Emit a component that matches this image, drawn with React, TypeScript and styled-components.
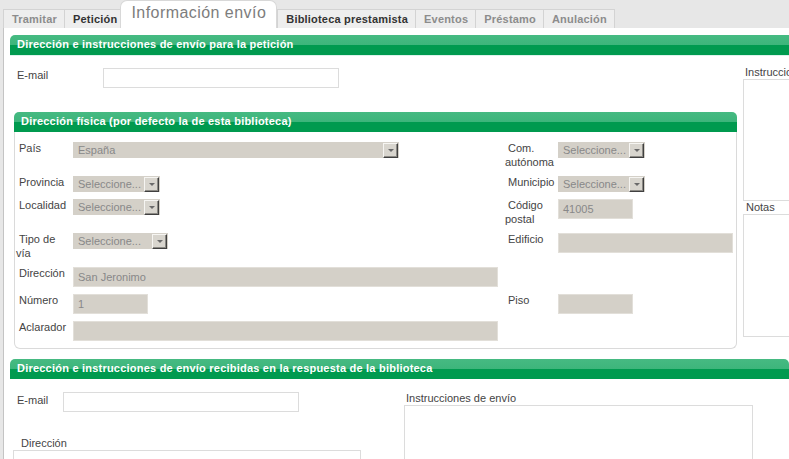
import React from 'react';
import styled, { createGlobalStyle } from 'styled-components';

const Global = createGlobalStyle`
  html, body { margin: 0; padding: 0; }
  body {
    background: #ebebeb;
    font-family: 'Liberation Sans', Arial, sans-serif;
    font-size: 11px;
    color: #3a3a3a;
  }
`;

const Page = styled.div`
  width: 789px;
  height: 459px;
  overflow: hidden;
  background: #e7e7e7;
  display: flex;
  flex-direction: column;
`;

const TabBar = styled.div`
  height: 28px;
  flex-shrink: 0;
  display: flex;
  align-items: flex-end;
  padding-left: 3px;
`;

const Tab = styled.div<{ $enabled?: boolean }>`
  height: 19px;
  box-sizing: border-box;
  padding: 0 7px 0 8px;
  border: 1px solid #d3d3d3;
  border-bottom: none;
  background: #eeeeee;
  font-weight: bold;
  font-size: 11px;
  letter-spacing: 0.2px;
  line-height: 18px;
  color: ${(p) => (p.$enabled ? '#333333' : '#8c8c8c')};
  white-space: nowrap;
  & + & { border-left: none; }
`;

const ActiveTab = styled.div`
  position: relative;
  height: 28px;
  box-sizing: border-box;
  margin-left: -5px;
  padding: 2px 10px 0;
  background: #ffffff;
  border: 1px solid #d8d8d8;
  border-bottom: none;
  border-radius: 7px 7px 0 0;
  font-size: 16px;
  letter-spacing: 0.45px;
  line-height: 19px;
  color: #7d7d7d;
  white-space: nowrap;
`;

const Content = styled.div`
  flex: 1;
  margin-left: 3px;
  border-left: 1px solid #c4c4c4;
  background: #ffffff;
  padding: 7px 0 0 6px;
  display: flex;
  flex-direction: column;
  gap: 10px;
  overflow: hidden;
`;

const Section = styled.section<{ $width: number }>`
  width: ${(p) => p.$width}px;
  flex-shrink: 0;
`;

const SectionHeader = styled.div`
  height: 20px;
  box-sizing: border-box;
  padding-left: 7px;
  line-height: 19px;
  color: #ffffff;
  font-weight: bold;
  font-size: 11px;
  letter-spacing: 0.22px;
  white-space: nowrap;
  border-radius: 5px 5px 0 0;
  background: linear-gradient(
    to bottom,
    #46ba82 0,
    #3db57b 10px,
    #009a4f 10px,
    #009a4f 100%
  );
`;

const SectionBody = styled.div<{ $topLine?: boolean }>`
  display: flex;
  align-items: flex-start;
  border-top: 1px solid ${(p) => (p.$topLine ? '#dcf3ec' : 'transparent')};
`;

const Column = styled.div<{ $width?: number; $pad: string }>`
  ${(p) => (p.$width ? `width: ${p.$width}px; flex-shrink: 0;` : 'flex: 1;')}
  box-sizing: border-box;
  padding: ${(p) => p.$pad};
  display: flex;
  flex-direction: column;
`;

const FieldRow = styled.div<{ $pad: string; $labelWidth: number }>`
  display: grid;
  grid-template-columns: ${(p) => p.$labelWidth}px auto;
  align-items: start;
  justify-content: start;
  padding: ${(p) => p.$pad};
`;

const Label = styled.div<{ $pad?: string }>`
  line-height: 13px;
  color: #444444;
  white-space: nowrap;
  padding: ${(p) => p.$pad || '0'};
`;

const TextBox = styled.div<{ $w: number; $h?: number }>`
  width: ${(p) => p.$w}px;
  height: ${(p) => p.$h || 20}px;
  box-sizing: border-box;
  border: 1px solid #dcdcdc;
  background: #ffffff;
`;

const Panel = styled.div`
  width: 723px;
  margin-top: 24px;
`;

const PanelBody = styled.div`
  border: 1px solid #dadada;
  border-top: none;
  border-radius: 0 0 6px 6px;
  padding: 10px 3px 7px 1px;
`;

const FormGrid = styled.div`
  display: grid;
  grid-template-columns: 57px 432px 53px 175px;
  row-gap: 7px;
  align-items: start;
`;

const GridLabel = styled.div`
  line-height: 13.5px;
  color: #444444;
  white-space: nowrap;
  text-indent: 3px;
`;

const Select = styled.div<{ $w: number }>`
  width: ${(p) => p.$w}px;
  height: 16px;
  box-sizing: border-box;
  background: #d4d0c8;
  display: flex;
  align-items: center;
  justify-content: space-between;
  padding: 0 1px 0 5px;
  color: #888888;
  line-height: 14px;
  white-space: nowrap;
`;

const SelectButton = styled.span`
  width: 15px;
  height: 15px;
  box-sizing: border-box;
  flex-shrink: 0;
  background: #d8d5ce;
  border-top: 1px solid #f6f5f2;
  border-left: 1px solid #f6f5f2;
  border-right: 1px solid #404040;
  border-bottom: 1px solid #404040;
  box-shadow: inset -1px -1px 0 #8c8a85;
  display: flex;
  align-items: center;
  justify-content: center;
  &::after {
    content: '';
    width: 0;
    height: 0;
    margin-top: 1px;
    border-left: 3px solid transparent;
    border-right: 3px solid transparent;
    border-top: 3px solid #6a6a6a;
  }
`;

const DisabledInput = styled.div<{ $w: number }>`
  width: ${(p) => p.$w}px;
  height: 20px;
  box-sizing: border-box;
  background: #d4d0c8;
  border: 1px solid #e2dfd9;
  padding-left: 4px;
  line-height: 18px;
  color: #888888;
  white-space: nowrap;
`;

const Empty = styled.div``;

const SelectBox = ({ w, value = 'Seleccione...' }: { w: number; value?: string }) => (
  <Select $w={w}>
    <span>{value}</span>
    <SelectButton />
  </Select>
);

export default function App() {
  return (
    <>
      <Global />
      <Page>
        <TabBar>
          <Tab>Tramitar</Tab>
          <Tab $enabled>Petición</Tab>
          <ActiveTab>Información envío</ActiveTab>
          <Tab $enabled>Biblioteca prestamista</Tab>
          <Tab>Eventos</Tab>
          <Tab>Préstamo</Tab>
          <Tab>Anulación</Tab>
        </TabBar>
        <Content>
          <Section $width={790}>
            <SectionHeader>Dirección e instrucciones de envío para la petición</SectionHeader>
            <SectionBody $topLine>
              <Column $width={727} $pad="12px 0 0 4px">
                <FieldRow $pad="0 0 0 3px" $labelWidth={86}>
                  <Label $pad="1px 0 0 0">E-mail</Label>
                  <TextBox $w={236} />
                </FieldRow>
                <Panel>
                  <SectionHeader>Dirección física (por defecto la de esta biblioteca)</SectionHeader>
                  <PanelBody>
                    <FormGrid>
                      <GridLabel>País</GridLabel>
                      <SelectBox w={326} value="España" />
                      <GridLabel>Com.<br />autónoma</GridLabel>
                      <SelectBox w={87} />

                      <GridLabel>Provincia</GridLabel>
                      <SelectBox w={87} />
                      <GridLabel>Municipio</GridLabel>
                      <SelectBox w={87} />

                      <GridLabel>Localidad</GridLabel>
                      <SelectBox w={87} />
                      <GridLabel>Código<br />postal</GridLabel>
                      <DisabledInput $w={75}>41005</DisabledInput>

                      <GridLabel>Tipo de<br />vía</GridLabel>
                      <SelectBox w={95} />
                      <GridLabel>Edificio</GridLabel>
                      <DisabledInput $w={175} />

                      <GridLabel>Dirección</GridLabel>
                      <DisabledInput $w={425}>San Jeronimo</DisabledInput>
                      <Empty />
                      <Empty />

                      <GridLabel>Número</GridLabel>
                      <DisabledInput $w={75}>1</DisabledInput>
                      <GridLabel>Piso</GridLabel>
                      <DisabledInput $w={75} />

                      <GridLabel>Aclarador</GridLabel>
                      <DisabledInput $w={425} />
                      <Empty />
                      <Empty />
                    </FormGrid>
                  </PanelBody>
                </Panel>
              </Column>
              <Column $pad="10px 0 0 6px">
                <Label $pad="0 0 0 2px">Instrucciones de envío</Label>
                <TextBox $w={80} $h={122} />
                <Label $pad="0 0 0 3px">Notas</Label>
                <TextBox $w={80} $h={123} />
              </Column>
            </SectionBody>
          </Section>
          <Section $width={779}>
            <SectionHeader>Dirección e instrucciones de envío recibidas en la respuesta de la biblioteca</SectionHeader>
            <SectionBody>
              <Column $width={394} $pad="12px 0 0 3px">
                <FieldRow $pad="0 0 0 4px" $labelWidth={46}>
                  <Label $pad="2px 0 0 0">E-mail</Label>
                  <TextBox $w={236} />
                </FieldRow>
                <Label $pad="25px 0 0 8px">Dirección</Label>
                <TextBox $w={348} $h={40} />
              </Column>
              <Column $pad="12px 0 0 0">
                <Label $pad="0 0 0 2px">Instrucciones de envío</Label>
                <TextBox $w={349} $h={80} />
              </Column>
            </SectionBody>
          </Section>
        </Content>
      </Page>
    </>
  );
}
